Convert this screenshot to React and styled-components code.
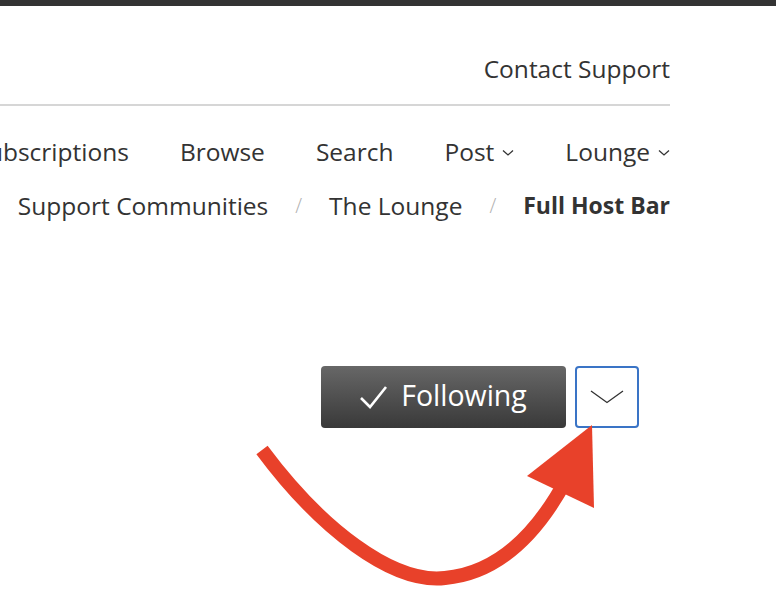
import React from "react";
import styled, { createGlobalStyle } from "styled-components";

const Global = createGlobalStyle`
  html, body { margin: 0; padding: 0; background: #fff; }
  body { font-family: "Open Sans", "Liberation Sans", sans-serif; color: #333; }
`;

const Page = styled.div`
  position: relative;
  width: 776px;
  height: 596px;
  overflow: hidden;
  background: #fff;
`;

const TopBar = styled.div`
  height: 6px;
  background: #333;
`;

const Header = styled.header`
  padding-right: 106px;
`;

const ContactRow = styled.div`
  display: flex;
  justify-content: flex-end;
  padding-top: 42px;
  margin-bottom: 16px;
  height: 40px;
  align-items: center;
`;

const ContactLink = styled.a`
  font-size: 24.5px;
  font-weight: 400;
  color: #333;
  text-decoration: none;
  white-space: nowrap;
`;

const Divider = styled.div`
  height: 2px;
  background: #d6d6d6;
`;

const NavRow = styled.nav`
  display: flex;
  justify-content: flex-end;
  align-items: center;
  gap: 51px;
  height: 40px;
  margin-top: 25px;
  white-space: nowrap;
`;

const NavItem = styled.span`
  flex-shrink: 0;
  display: inline-flex;
  align-items: center;
  gap: 8px;
  font-size: 24.5px;
  color: #333;
`;

const Crumbs = styled.div`
  display: flex;
  justify-content: flex-end;
  align-items: center;
  gap: 27px;
  height: 40px;
  margin-top: 14px;
  white-space: nowrap;
`;

const Crumb = styled.span`
  flex-shrink: 0;
  font-size: ${(p) => (p.$current ? "23px" : "24.5px")};
  color: #333;
  font-weight: ${(p) => (p.$current ? 700 : 400)};
`;

const Sep = styled.span`
  flex-shrink: 0;
  font-size: 20px;
  color: #b0b0b0;
  font-weight: 300;
`;

const ActionRow = styled.div`
  display: flex;
  justify-content: flex-end;
  gap: 9px;
  margin-top: 141px;
  padding-right: 137px;
`;

const FollowButton = styled.button`
  width: 245px;
  height: 62px;
  border: none;
  border-radius: 4px;
  background: linear-gradient(#676767, #393939);
  color: #fff;
  display: flex;
  align-items: center;
  justify-content: center;
  gap: 13px;
  font-family: "Open Sans", "Liberation Sans", sans-serif;
  font-size: 28.5px;
  line-height: 1;
  padding: 0 0 4px;
`;

const MenuButton = styled.button`
  width: 64px;
  height: 62px;
  box-sizing: border-box;
  border: 2px solid #3a74c6;
  border-radius: 4px;
  background: #fff;
  display: flex;
  align-items: center;
  justify-content: center;
  padding: 0;
`;

const Annotation = styled.svg`
  position: absolute;
  left: 0;
  top: 0;
  pointer-events: none;
`;

const SmallChevron = () => (
  <svg width="12" height="8" viewBox="0 0 12 8" style={{ marginTop: 4 }}>
    <path d="M1 1.5 L6 6 L11 1.5" fill="none" stroke="#333" strokeWidth="1.3" />
  </svg>
);

export default function App() {
  return (
    <Page>
      <Global />
      <TopBar />
      <Header>
        <ContactRow>
          <ContactLink href="#">Contact Support</ContactLink>
        </ContactRow>
        <Divider />
        <NavRow>
          <NavItem>My Subscriptions</NavItem>
          <NavItem>Browse</NavItem>
          <NavItem>Search</NavItem>
          <NavItem>
            Post <SmallChevron />
          </NavItem>
          <NavItem>
            Lounge <SmallChevron />
          </NavItem>
        </NavRow>
        <Crumbs>
          <Crumb>Support Communities</Crumb>
          <Sep>/</Sep>
          <Crumb>The Lounge</Crumb>
          <Sep>/</Sep>
          <Crumb $current>Full Host Bar</Crumb>
        </Crumbs>
      </Header>
      <ActionRow>
        <FollowButton>
          <svg width="28" height="24" viewBox="0 0 28 24" style={{ marginTop: 4 }}>
            <path d="M1 13 L10 22 L26 2" fill="none" stroke="#fff" strokeWidth="2.6" />
          </svg>
          Following
        </FollowButton>
        <MenuButton aria-label="More">
          <svg width="36" height="16" viewBox="0 0 36 16">
            <path d="M2 2 L18 13.5 L34 2" fill="none" stroke="#333" strokeWidth="1.3" />
          </svg>
        </MenuButton>
      </ActionRow>
      <Annotation width="776" height="596" viewBox="0 0 776 596">
        <path
          d="M262 450 C 320 528, 392 584, 445 578 C 500 573, 538 532, 566 480"
          fill="none"
          stroke="#e8412a"
          strokeWidth="14"
        />
        <polygon points="527,476 592,425 594,508" fill="#e8412a" />
      </Annotation>
    </Page>
  );
}
